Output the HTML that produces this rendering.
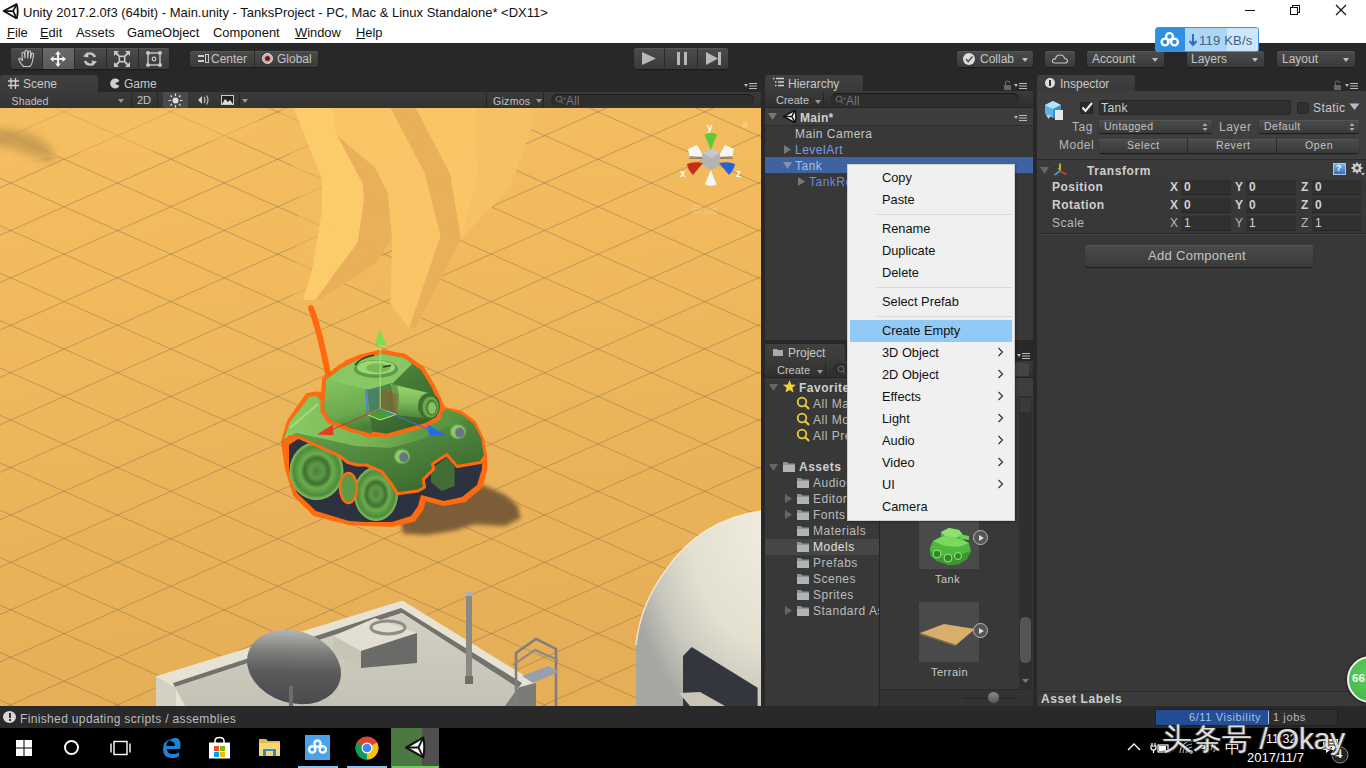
<!DOCTYPE html>
<html><head><meta charset="utf-8">
<style>
*{margin:0;padding:0;box-sizing:border-box}
html,body{width:1366px;height:768px;overflow:hidden;background:#282828;font-family:"Liberation Sans",sans-serif}
.a{position:absolute}
.t{position:absolute;white-space:nowrap;line-height:1}
.u{color:#bdbdbd;font-size:11px}
.btn{position:absolute;border-radius:3px;background:linear-gradient(#4b4b4b,#3a3a3a);box-shadow:0 1px 1px #1a1a1a, inset 0 1px 0 #555}
.dd{position:absolute;width:0;height:0;border-left:3px solid transparent;border-right:3px solid transparent;border-top:4px solid #bdbdbd}
.menu{position:absolute;font-size:12.8px;color:#111;white-space:nowrap;line-height:1}
.arr{position:absolute;font-size:13px;color:#333}
</style></head><body>

<!-- Title bar -->
<div class="a" style="left:0;top:0;width:1366px;height:43px;background:#fff"></div>
<svg class="a" style="left:2px;top:2px" width="17" height="17" viewBox="0 0 16 16"><path d="M1.5,8.5 L13.8,2 Q15.8,8.5 13.8,15.5 Z" fill="none" stroke="#111" stroke-width="1.7" stroke-linejoin="round"/><path d="M10.5,8.5 L1.5,8.5 M10.5,8.5 L13.8,2 M10.5,8.5 L13.8,15.5" stroke="#111" stroke-width="1.6"/></svg>
<div class="t" style="left:23px;top:5.5px;font-size:13px;color:#111">Unity 2017.2.0f3 (64bit) - Main.unity - TanksProject - PC, Mac &amp; Linux Standalone* &lt;DX11&gt;</div>
<!-- window controls -->
<div class="a" style="left:1245px;top:10px;width:10px;height:1px;background:#111"></div>
<div class="a" style="left:1292px;top:5px;width:8px;height:8px;border:1px solid #111"></div>
<div class="a" style="left:1290px;top:7px;width:8px;height:8px;border:1px solid #111;background:#fff"></div>
<svg class="a" style="left:1335px;top:4px" width="12" height="12"><path d="M1 1L11 11M11 1L1 11" stroke="#111" stroke-width="1.2"/></svg>

<!-- Menu -->
<div class="t" style="left:7px;top:26.5px;font-size:12.9px;color:#111"><u>F</u>ile</div>
<div class="t" style="left:40px;top:26.5px;font-size:12.9px;color:#111"><u>E</u>dit</div>
<div class="t" style="left:76px;top:26.5px;font-size:12.9px;color:#111">Assets</div>
<div class="t" style="left:127px;top:26.5px;font-size:12.9px;color:#111">GameObject</div>
<div class="t" style="left:213px;top:26.5px;font-size:12.9px;color:#111">Component</div>
<div class="t" style="left:295px;top:26.5px;font-size:12.9px;color:#111"><u>W</u>indow</div>
<div class="t" style="left:356px;top:26.5px;font-size:12.9px;color:#111"><u>H</u>elp</div>

<!-- Main toolbar -->
<div class="a" style="left:0;top:43px;width:1366px;height:33px;background:#282828"></div>


<!--SCENE--><svg class="a" style="left:0;top:108px" width="761" height="598" viewBox="0 108 761 598">
<defs><linearGradient id="bg" x1="0" y1="0" x2="0.15" y2="1"><stop offset="0" stop-color="#f5be60"/><stop offset="0.3" stop-color="#f2ba5d"/><stop offset="1" stop-color="#e6ae56"/></linearGradient><filter id="blur4" x="-50%" y="-50%" width="200%" height="200%"><feGaussianBlur stdDeviation="4"/></filter><filter id="blur2" x="-50%" y="-50%" width="200%" height="200%"><feGaussianBlur stdDeviation="2"/></filter><filter id="blur1"><feGaussianBlur stdDeviation="0.7"/></filter><linearGradient id="dish" x1="0.2" y1="0" x2="0.6" y2="1"><stop offset="0" stop-color="#c4c4be"/><stop offset="0.35" stop-color="#7c7c7a"/><stop offset="0.6" stop-color="#5a5a5c"/><stop offset="1" stop-color="#4a4a4e"/></linearGradient><linearGradient id="dome" x1="1" y1="0.1" x2="0" y2="0.9"><stop offset="0" stop-color="#efecdc"/><stop offset="0.5" stop-color="#e2dfcf"/><stop offset="1" stop-color="#a8a8a4"/></linearGradient><radialGradient id="wheel" cx="0.45" cy="0.4" r="0.6"><stop offset="0" stop-color="#4f8a3c"/><stop offset="0.35" stop-color="#6fb050"/><stop offset="0.7" stop-color="#4d8a3a"/><stop offset="1" stop-color="#7cc058"/></radialGradient></defs>
<rect x="0" y="108" width="761" height="598" fill="url(#bg)"/>
<path d="M-10,128 Q25,128 45,142 Q58,152 52,160 Q30,156 10,148 L-10,146 Z" fill="#7a5a34" opacity="0.6" filter="url(#blur4)"/>
<polygon points="440,478 480,483.75 505,494.7 517.5,505.6 520.6,518 505,526 473.75,524.4 455,530.6 427,535 403.4,533.75 400,520" fill="#6a5030" opacity="0.85" filter="url(#blur2)"/>
<path d="M-10,-1296.54L771,-949.62M-10,-1183.26L771,-1530.18M-10,-1249.11L771,-902.19M-10,-1135.83L771,-1482.75M-10,-1201.68L771,-854.76M-10,-1088.40L771,-1435.32M-10,-1154.25L771,-807.33M-10,-1040.97L771,-1387.89M-10,-1106.82L771,-759.90M-10,-993.54L771,-1340.46M-10,-1059.39L771,-712.47M-10,-946.11L771,-1293.03M-10,-1011.96L771,-665.04M-10,-898.68L771,-1245.60M-10,-964.53L771,-617.61M-10,-851.25L771,-1198.17M-10,-917.10L771,-570.18M-10,-803.82L771,-1150.74M-10,-869.67L771,-522.75M-10,-756.39L771,-1103.31M-10,-822.24L771,-475.32M-10,-708.96L771,-1055.88M-10,-774.81L771,-427.89M-10,-661.53L771,-1008.45M-10,-727.38L771,-380.46M-10,-614.10L771,-961.02M-10,-679.95L771,-333.03M-10,-566.67L771,-913.59M-10,-632.52L771,-285.60M-10,-519.24L771,-866.16M-10,-585.09L771,-238.17M-10,-471.81L771,-818.73M-10,-537.66L771,-190.74M-10,-424.38L771,-771.30M-10,-490.23L771,-143.31M-10,-376.95L771,-723.87M-10,-442.80L771,-95.88M-10,-329.52L771,-676.44M-10,-395.37L771,-48.45M-10,-282.09L771,-629.01M-10,-347.94L771,-1.02M-10,-234.66L771,-581.58M-10,-300.51L771,46.41M-10,-187.23L771,-534.15M-10,-253.08L771,93.84M-10,-139.80L771,-486.72M-10,-205.65L771,141.27M-10,-92.37L771,-439.29M-10,-158.22L771,188.70M-10,-44.94L771,-391.86M-10,-110.79L771,236.13M-10,2.49L771,-344.43M-10,-63.36L771,283.56M-10,49.92L771,-297.00M-10,-15.93L771,330.99M-10,97.35L771,-249.57M-10,31.50L771,378.42M-10,144.78L771,-202.14M-10,78.93L771,425.85M-10,192.21L771,-154.71M-10,126.36L771,473.28M-10,239.64L771,-107.28M-10,173.79L771,520.71M-10,287.07L771,-59.85M-10,221.22L771,568.14M-10,334.50L771,-12.42M-10,268.65L771,615.57M-10,381.93L771,35.01M-10,316.08L771,663.00M-10,429.36L771,82.44M-10,363.51L771,710.43M-10,476.79L771,129.87M-10,410.94L771,757.86M-10,524.22L771,177.30M-10,458.37L771,805.29M-10,571.65L771,224.73M-10,505.80L771,852.72M-10,619.08L771,272.16M-10,553.23L771,900.15M-10,666.51L771,319.59M-10,600.66L771,947.58M-10,713.94L771,367.02M-10,648.09L771,995.01M-10,761.37L771,414.45M-10,695.52L771,1042.44M-10,808.80L771,461.88M-10,742.95L771,1089.87M-10,856.23L771,509.31M-10,790.38L771,1137.30M-10,903.66L771,556.74M-10,837.81L771,1184.73M-10,951.09L771,604.17M-10,885.24L771,1232.16M-10,998.52L771,651.60M-10,932.67L771,1279.59M-10,1045.95L771,699.03M-10,980.10L771,1327.02M-10,1093.38L771,746.46M-10,1027.53L771,1374.45M-10,1140.81L771,793.89M-10,1074.96L771,1421.88M-10,1188.24L771,841.32M-10,1122.39L771,1469.31M-10,1235.67L771,888.75M-10,1169.82L771,1516.74M-10,1283.10L771,936.18M-10,1217.25L771,1564.17M-10,1330.53L771,983.61M-10,1264.68L771,1611.60M-10,1377.96L771,1031.04M-10,1312.11L771,1659.03M-10,1425.39L771,1078.47M-10,1359.54L771,1706.46M-10,1472.82L771,1125.90M-10,1406.97L771,1753.89M-10,1520.25L771,1173.33M-10,1454.40L771,1801.32M-10,1567.68L771,1220.76M-10,1501.83L771,1848.75M-10,1615.11L771,1268.19" stroke="#7a6a50" stroke-opacity="0.42" stroke-width="1" fill="none"/>
<polygon points="0,108 262,108 257,130 168,152 99,150 0,165" fill="#f7c264" opacity="0.45"/>
<polygon points="293.8,108.0 534.0,108.0 531.0,130.0 509.0,189.0 461.0,239.0 415.6,328.0 409.0,328.0 390.6,305.0 392.0,239.0 375.0,264.0 318.8,300.0 303.0,300.0 312.5,267.5 321.9,211.0 321.9,180.0" fill="#f9c767" opacity="0.9"/>
<polygon points="293.8,108.0 332.0,108.0 337.5,136.0 362.5,183.0 364.0,199.0 357.8,242.5 334.4,273.8 315.6,300.0 303.0,300.0 312.5,267.5 321.9,211.0 321.9,180.0" fill="#fdcc6b" opacity="0.85"/>
<polygon points="337.5,136.0 375.0,167.5 387.5,192.5 392.0,239.0 375.0,264.0 318.8,300.0 315.6,300.0 334.4,273.8 357.8,242.5 364.0,199.0 362.5,183.0" fill="#e7ac58" opacity="0.9"/>
<polygon points="390.6,108.0 415.6,108.0 450.0,173.8 461.0,239.0 415.6,328.0 409.0,328.0 440.6,236.0 425.0,173.8" fill="#e7ac58" opacity="0.9"/>
<polygon points="475.0,108.0 534.0,108.0 531.0,130.0 509.0,189.0 461.0,239.0 478.0,177.0" fill="#f5c064" opacity="0.9"/>
<polygon points="280,108 293.75,108 321.9,180 321.9,211 312.5,267.5 303,300 292,298 300,200" fill="#f3bc62" opacity="0.5"/>
<defs><linearGradient id="hullf" x1="0" y1="0" x2="0.7" y2="1"><stop offset="0" stop-color="#72b452"/><stop offset="0.5" stop-color="#568e42"/><stop offset="1" stop-color="#3a6a2e"/></linearGradient><linearGradient id="turf" x1="0" y1="0" x2="0.2" y2="1"><stop offset="0" stop-color="#84c660"/><stop offset="0.7" stop-color="#6aa84e"/><stop offset="1" stop-color="#4a8038"/></linearGradient><linearGradient id="turs" x1="0" y1="0" x2="0.8" y2="1"><stop offset="0" stop-color="#5e9c48"/><stop offset="1" stop-color="#34602a"/></linearGradient><linearGradient id="barrel" x1="0" y1="0" x2="0" y2="1"><stop offset="0" stop-color="#9ad870"/><stop offset="0.5" stop-color="#7cbc5a"/><stop offset="1" stop-color="#4a8038"/></linearGradient><radialGradient id="whl" cx="0.5" cy="0.5" r="0.5"><stop offset="0" stop-color="#4a7e3a"/><stop offset="0.25" stop-color="#5c9a46"/><stop offset="0.45" stop-color="#3f7030"/><stop offset="0.6" stop-color="#6aae4e"/><stop offset="0.85" stop-color="#4e8a3c"/><stop offset="1" stop-color="#86c464"/></radialGradient></defs>
<polygon points="331.0,376.0 345.8,361.5 360.0,355.8 378.8,351.0 396.0,355.8 413.0,365.8 427.5,380.0 439.0,395.9 444.0,408.0 461.6,412.0 475.0,422.0 483.0,439.0 486.0,456.0 486.5,469.0 481.5,487.0 465.0,501.0 444.0,505.0 425.0,500.0 422.5,509.0 414.5,520.5 392.0,526.0 366.0,525.0 349.0,524.0 314.0,515.0 294.0,495.0 286.0,469.0 282.0,442.0 288.0,421.0 299.0,405.0 307.0,394.0 316.0,392.5 323.3,393.0" fill="#ff6a10" stroke="#ff6a10" stroke-width="2" stroke-linejoin="round"/>
<path d="M311,308 Q321,335 329,380" stroke="#ff6a10" stroke-width="6" fill="none" stroke-linecap="round"/>
<polygon points="289.0,445.0 289.0,470.0 297.0,493.0 316.0,511.0 349.0,521.0 366.0,522.0 392.0,522.0 411.0,516.0 418.0,506.0 421.0,495.0 444.0,501.0 462.0,497.0 477.0,485.0 482.0,469.0 482.0,458.0 457.2,466.5 446.8,454.7 432.4,463.9 433.8,469.0 423.3,479.5 424.6,487.3 418.0,491.0 397.3,493.8 392.0,484.7 381.7,471.7 366.0,465.0 357.0,465.0 347.8,462.5 340.0,456.0 299.8,437.8" fill="#2c3240"/>
<ellipse cx="316.5" cy="471" rx="27" ry="29" fill="url(#whl)"/>
<ellipse cx="376" cy="494" rx="22" ry="27" fill="url(#whl)"/>
<ellipse cx="348.5" cy="488" rx="8.5" ry="15" fill="#5c9c46" stroke="#ff6a10" stroke-width="2.5"/>
<polygon points="431,469 446.8,457.3 454.6,466.5 454.6,486 441.6,491 431,482" fill="#406e34"/>
<polygon points="284.0,440.0 290.0,421.7 301.0,408.0 309.0,397.0 316.0,396.0 321.5,401.6 327.2,416.0 345.8,427.4 367.3,437.4 386.0,436.0 410.3,428.8 430.3,423.0 441.0,413.0 446.7,409.3 461.6,414.3 474.0,424.0 481.4,439.0 483.9,456.0 480.6,462.5 457.2,466.5 446.8,454.7 432.4,463.9 433.8,469.0 423.3,479.5 424.6,487.3 418.0,491.0 397.3,493.8 392.0,484.7 381.7,471.7 366.0,465.0 357.0,465.0 347.8,462.5 340.0,456.0 299.8,437.8 290.0,436.5" fill="url(#hullf)"/>
<defs><linearGradient id="htopg" x1="0" y1="0" x2="1" y2="0"><stop offset="0" stop-color="#8ccc64" stop-opacity="0.95"/><stop offset="0.45" stop-color="#80c05c" stop-opacity="0.8"/><stop offset="1" stop-color="#5a9a46" stop-opacity="0.3"/></linearGradient></defs>
<polygon points="284.0,439.0 290.0,421.7 301.0,408.0 309.0,397.0 316.0,396.0 321.5,401.6 327.2,416.0 345.8,427.4 367.3,437.4 386.0,436.0 410.3,428.8 430.3,423.0 441.0,413.0 446.7,409.3 461.6,414.3 468.0,420.0 445.0,428.0 420.0,440.0 390.0,448.0 355.0,446.0 320.0,438.0 296.0,433.0" fill="url(#htopg)"/>
<path d="M290,428 L318,404" stroke="#b0e888" stroke-width="2" opacity="0.7"/>
<polyline points="288,437 299.8,437.8 340,456 347.8,462.5 357,465 366,465 381.7,471.7 392,484.7 397.3,493.8 418,491 424.6,487.3 423.3,479.5 433.75,469 432.4,463.9 446.8,454.7 457.2,466.5 480.6,462.5 485,456" fill="none" stroke="#ff6a10" stroke-width="3" stroke-linejoin="round"/>
<ellipse cx="402" cy="456.3" rx="8.5" ry="8" fill="#5e9e48"/><ellipse cx="402" cy="456.3" rx="7" ry="6.5" fill="#8acb64"/><ellipse cx="403.8" cy="457.3" rx="4.5" ry="5" fill="#6a7488"/>
<ellipse cx="457.9" cy="431.6" rx="8.5" ry="8" fill="#5e9e48"/><ellipse cx="457.9" cy="431.6" rx="7" ry="6.5" fill="#8acb64"/><ellipse cx="459.7" cy="432.6" rx="4.5" ry="5" fill="#6a7488"/>
<polygon points="321.2,411.3 322.0,395.0 323.0,378.5 339.4,365.7 357.6,356.6 383.0,351.0 405.0,354.8 423.0,367.5 434.0,385.8 441.5,404.0 439.7,418.6 427.0,425.9 386.8,436.8 350.4,431.3 328.5,422.2" fill="#ff6a10" stroke="#ff6a10" stroke-width="2" stroke-linejoin="round"/>
<polygon points="324.5,410.5 325.0,395.0 326.0,380.0 341.0,368.5 358.5,359.6 383.0,354.0 404.0,357.8 421.0,370.0 431.5,387.0 438.5,404.0 437.0,416.5 425.5,423.0 386.5,433.8 351.0,428.3 330.5,419.5" fill="url(#turs)"/>
<polygon points="324.5,410.5 325.0,395.0 326.0,380.0 367.3,390.0 370.0,412.0 372.0,434.0 351.0,428.3 330.5,419.5" fill="url(#turf)"/>
<polygon points="326.0,380.0 341.0,368.5 358.5,359.6 383.0,354.0 404.0,357.8 412.0,364.0 393.0,383.0 367.3,390.0" fill="#88c864"/>
<polygon points="367.3,390 393,383 396,414 380,420 370,412" fill="#4e8a3c"/>
<ellipse cx="376" cy="369" rx="22" ry="9" fill="#5e9a48"/>
<ellipse cx="376" cy="367.5" rx="19" ry="7" fill="#9ad872"/>
<ellipse cx="378" cy="368" rx="12" ry="4.5" fill="#7ab858"/>
<path d="M355,365 Q360,358 374,355" stroke="#263d20" stroke-width="1.6" fill="none"/><path d="M383,367 L391,365.5" stroke="#263d20" stroke-width="1.6"/>
<polygon points="391,384 428.9,393 431,419 395,415" fill="url(#barrel)"/>
<ellipse cx="394" cy="399" rx="5" ry="16" fill="#4a8038" opacity="0.6"/>
<ellipse cx="429" cy="406" rx="11" ry="13" fill="#3e7030"/>
<ellipse cx="430.5" cy="407" rx="8" ry="10.5" fill="#6aa84c"/>
<ellipse cx="431.5" cy="407.5" rx="5.5" ry="8" fill="#4a8038"/>
<ellipse cx="432" cy="408" rx="4" ry="6" fill="#84c460"/>
<polygon points="365.9,390 380,388.7 380,408.8 367.3,414.5" fill="#3a6ad0" fill-opacity="0.25" stroke="#4a7ae0" stroke-width="1.2"/>
<polygon points="380,388.7 396,394.4 396,414.5 380,408.8" fill="#b04030" fill-opacity="0.35" stroke="#c05040" stroke-width="1"/>
<polygon points="367.3,414.5 380,408.8 396,414.5 380,420" fill="#4a9a38" stroke="#b8f080" stroke-width="1"/>
<path d="M380.2,345 L380.2,409" stroke="#9ae870" stroke-width="1"/>
<path d="M380,409 L331,430" stroke="#d03020" stroke-width="1.2" opacity="0.8"/>
<path d="M380,409 L430,430" stroke="#3a70e0" stroke-width="1.2" opacity="0.9"/>
<polygon points="374.5,345 386,345 380.2,329" fill="#7edc50"/>
<polygon points="317,434.6 333,424.5 333.6,435.3" fill="#e83a20"/>
<polygon points="446,435.3 427.5,424.5 429,435.3" fill="#2a6ae8"/>
<polygon points="402.5,600.6 536.0,682.7 536.0,706.0 156.0,706.0 156.0,676.3" fill="#e6e3d3"/>
<polygon points="156,676.3 176,688 176,706 156,706" fill="#d4d1c2"/>
<polygon points="536,682.7 536,706 470,706 480,698" fill="#7b7b78"/>
<polygon points="401,608 522,683 518,688 402,613 175,687 173,683" fill="#5e5e5c" opacity="0.85"/>
<defs><linearGradient id="roofin" x1="0" y1="0" x2="0" y2="1"><stop offset="0" stop-color="#d2d0c2"/><stop offset="1" stop-color="#c4c2b5"/></linearGradient></defs><polygon points="402,613 518,688 505,706 185,706 175,687" fill="url(#roofin)"/>
<polygon points="333.5,636 375,618 417,633 361,651" fill="#e2dfd1"/>
<polygon points="333.5,636 361,651 361,668 333.5,655" fill="#c8c5b6"/>
<polygon points="361,651 417,633 417,663 361,668" fill="#6a6a68"/>
<ellipse cx="388" cy="627.4" rx="17" ry="6.5" fill="none" stroke="#8e8c84" stroke-width="3"/>
<ellipse cx="294" cy="667" rx="48" ry="36" fill="url(#dish)" transform="rotate(18 294 667)"/>
<rect x="289" y="686" width="4" height="20" fill="#6c6c6a"/>
<rect x="466" y="593" width="6" height="90" fill="#8a8984"/><rect x="465" y="676" width="8" height="8" fill="#6f6e6a"/><rect x="465" y="592" width="8" height="4" fill="#b0afaa"/>
<path d="M516,706 L516,653 L536,639 L556,649 L556,706" fill="none" stroke="#7f7e7a" stroke-width="2.5"/>
<path d="M513,665 L535,650 L558,660" fill="none" stroke="#8a8984" stroke-width="2"/>
<polygon points="522,676 548,666 559,672 533,683" fill="#9aa0aa"/>
<defs><radialGradient id="domeR" cx="1.05" cy="0.05" r="1.15"><stop offset="0" stop-color="#f0ede0"/><stop offset="0.55" stop-color="#e3e0d0"/><stop offset="0.8" stop-color="#c9c8bd"/><stop offset="1" stop-color="#a6a6a2"/></radialGradient></defs>
<path d="M761,511 Q700,520 666,570 Q640,605 636,645 L636,706 L761,706 Z" fill="url(#domeR)"/>
<path d="M761,511 Q700,520 666,570 Q640,605 636,645" fill="none" stroke="#f6f2dc" stroke-width="1.5" opacity="0.8"/>
<polygon points="683,656 691.7,647 757.6,687.7 757.6,706 683,706" fill="#34363e"/>
<polygon points="679,693 700,692 725,706 690,706" fill="#c9c6b8"/>
<polygon points="688,149 697,145 704,157 690,158" fill="#f6f6f6"/>
<polygon points="690,156 704,157 703,159 689,159" fill="#6a5a4a" opacity="0.6"/>
<polygon points="734,149 725,145 718,157 732,158" fill="#f6f6f6"/>
<polygon points="732,156 718,157 719,159 733,159" fill="#6a5a4a" opacity="0.6"/>
<polygon points="702,153 711,148 720,153 720,165 711,170 702,165" fill="#b4b4b4"/>
<polygon points="702,153 711,148 720,153 711,158" fill="#c8c8c8"/>
<path d="M704.5,134.5 Q710.8,131 717,134.5 L710.8,150 Z" fill="#62c83a"/>
<path d="M687,164 Q693,161 703,163 L693,175 Q688,170 687,164 Z" fill="#c0301a"/>
<path d="M735,164 Q729,161 719,163 L729,175 Q734,170 735,164 Z" fill="#2a62d8"/>
<path d="M705,184.5 Q710.8,187 716.6,184.5 L710.8,170 Z" fill="#f6f6f6"/>
<text x="707" y="131" font-family="Liberation Sans" font-weight="bold" font-size="10" fill="#fff">y</text>
<text x="680" y="177" font-family="Liberation Sans" font-weight="bold" font-size="10" fill="#fff">x</text>
<text x="736" y="177" font-family="Liberation Sans" font-weight="bold" font-size="10" fill="#fff">z</text>
<path d="M692,206H702M692,209H702M692,212H702" stroke="#fde0b0" stroke-width="1" opacity="0.5"/>
<text x="704" y="214" font-family="Liberation Sans" font-size="10" fill="#fde0b0" opacity="0.4">Iso</text>
<circle cx="745" cy="125" r="3" fill="#f7d9a8" opacity="0.5"/>
</svg><!--/SCENE-->
<!-- tool buttons -->
<div class="btn" style="left:11px;top:48px;width:158px;height:21px"></div>
<div class="a" style="left:42px;top:48px;width:32px;height:21px;background:linear-gradient(#6a6a6a,#5a5a5a)"></div>
<div class="a" style="left:42px;top:48px;width:1px;height:21px;background:#2a2a2a"></div>
<div class="a" style="left:74px;top:48px;width:1px;height:21px;background:#2a2a2a"></div>
<div class="a" style="left:106px;top:48px;width:1px;height:21px;background:#2a2a2a"></div>
<div class="a" style="left:138px;top:48px;width:1px;height:21px;background:#2a2a2a"></div>
<!-- hand -->
<svg class="a" style="left:17px;top:49px" width="20" height="19" viewBox="0 0 20 19"><path d="M6.5 17.5 Q3 14 1.8 10.5 Q1.5 9 3 9.2 L5.5 11.5 L5 4.5 Q5 3.2 6.2 3.2 Q7.3 3.2 7.5 4.5 L8 9 L8 2.5 Q8.2 1.3 9.3 1.3 Q10.5 1.3 10.6 2.5 L10.8 9 L11.3 3.2 Q11.5 2 12.6 2 Q13.7 2.1 13.7 3.3 L13.5 9.2 L14.5 5 Q14.8 4 15.8 4.2 Q16.8 4.5 16.6 5.6 L15.5 12 Q15 15.5 13 17.5 Z" fill="none" stroke="#c8c8c8" stroke-width="1.1" stroke-linejoin="round"/></svg>
<!-- move -->
<svg class="a" style="left:49px;top:50px" width="18" height="18" viewBox="0 0 18 18"><path d="M9 1 L12 4.5 L10 4.5 L10 8 L13.5 8 L13.5 6 L17 9 L13.5 12 L13.5 10 L10 10 L10 13.5 L12 13.5 L9 17 L6 13.5 L8 13.5 L8 10 L4.5 10 L4.5 12 L1 9 L4.5 6 L4.5 8 L8 8 L8 4.5 L6 4.5 Z" fill="#f2f2f2"/></svg>
<!-- rotate -->
<svg class="a" style="left:81px;top:50px" width="18" height="18" viewBox="0 0 18 18"><path d="M14 7 A5.5 5.5 0 0 0 5 5" fill="none" stroke="#c8c8c8" stroke-width="2.4"/><path d="M4 11 A5.5 5.5 0 0 0 13 13" fill="none" stroke="#c8c8c8" stroke-width="2.4"/><path d="M6.5 2 L2 6.5 L7.5 7.5 Z" fill="#c8c8c8"/><path d="M11.5 16 L16 11.5 L10.5 10.5 Z" fill="#c8c8c8"/></svg>
<!-- scale -->
<svg class="a" style="left:113px;top:50px" width="18" height="18" viewBox="0 0 18 18"><g fill="#c8c8c8"><path d="M1 1H6L1 6Z"/><path d="M17 1H12L17 6Z"/><path d="M1 17H6L1 12Z"/><path d="M17 17H12L17 12Z"/></g><path d="M3 3L6 6M15 3L12 6M3 15L6 12M15 15L12 12" stroke="#c8c8c8" stroke-width="1.8"/><rect x="6.3" y="6.3" width="5.4" height="5.4" fill="none" stroke="#c8c8c8" stroke-width="1.6"/><rect x="8.2" y="8.2" width="1.6" height="1.6" fill="#333"/></svg>
<!-- rect -->
<svg class="a" style="left:145px;top:50px" width="18" height="18" viewBox="0 0 18 18"><rect x="3" y="3" width="12" height="12" fill="none" stroke="#c8c8c8" stroke-width="1.4"/><circle cx="3" cy="3" r="2" fill="#c8c8c8"/><circle cx="15" cy="3" r="2" fill="#c8c8c8"/><circle cx="3" cy="15" r="2" fill="#c8c8c8"/><circle cx="15" cy="15" r="2" fill="#c8c8c8"/><circle cx="9" cy="9" r="1.8" fill="none" stroke="#c8c8c8" stroke-width="1.2"/></svg>

<!-- center/global -->
<div class="btn" style="left:190px;top:51px;width:128px;height:16px"></div>
<div class="a" style="left:254px;top:51px;width:1px;height:16px;background:#2a2a2a"></div>
<div class="a" style="left:198px;top:55px;width:6px;height:2px;background:#ccc"></div>
<div class="a" style="left:198px;top:60px;width:6px;height:2px;background:#ccc"></div>
<div class="a" style="left:205px;top:54px;width:4px;height:9px;border:1px solid #ccc"></div>
<div class="t u" style="left:211px;top:53px;font-size:12px;color:#c4c4c4">Center</div>
<div class="a" style="left:262px;top:53px;width:11px;height:11px;border-radius:50%;background:#caa;border:1px solid #ddd"><div class="a" style="left:2px;top:2px;width:5px;height:5px;border-radius:50%;background:#6a1a1a"></div></div>
<div class="t u" style="left:277px;top:53px;font-size:12px;color:#c4c4c4">Global</div>

<!-- play buttons -->
<div class="btn" style="left:634px;top:48px;width:94px;height:21px"></div>
<div class="a" style="left:664px;top:48px;width:1px;height:21px;background:#2a2a2a"></div>
<div class="a" style="left:697px;top:48px;width:1px;height:21px;background:#2a2a2a"></div>
<svg class="a" style="left:640px;top:50px" width="20" height="17"><path d="M2 2 L16 8.5 L2 15 Z" fill="#b8b8b8"/></svg>
<div class="a" style="left:677px;top:52px;width:3px;height:13px;background:#b8b8b8"></div>
<div class="a" style="left:684px;top:52px;width:3px;height:13px;background:#b8b8b8"></div>
<svg class="a" style="left:703px;top:50px" width="20" height="17"><path d="M3 2 L15 8.5 L3 15 Z" fill="#b8b8b8"/><rect x="15" y="2" width="3" height="13" fill="#b8b8b8"/></svg>

<!-- right toolbar buttons -->
<div class="btn" style="left:957px;top:51px;width:76px;height:16px"></div>
<div class="a" style="left:963px;top:53px;width:12px;height:12px;border-radius:50%;background:#ddd"></div>
<svg class="a" style="left:963px;top:53px" width="12" height="12"><path d="M3 6 L5.2 8.5 L9.5 3.5" fill="none" stroke="#555" stroke-width="1.6"/></svg>
<div class="t u" style="left:980px;top:53px;font-size:12px;color:#c4c4c4">Collab</div>
<div class="dd" style="left:1022px;top:58px"></div>
<div class="btn" style="left:1045px;top:51px;width:30px;height:16px"></div>
<svg class="a" style="left:1051px;top:53px" width="18" height="12"><path d="M4 10 Q1 10 1.5 7.5 Q2 5.5 4.5 6 Q5 2 9 2 Q13 2 13.5 5.5 Q16.5 5.5 16.5 8 Q16.5 10 14 10 Z" fill="none" stroke="#c4c4c4" stroke-width="1.1"/></svg>
<div class="btn" style="left:1087px;top:51px;width:77px;height:16px"></div>
<div class="t u" style="left:1092px;top:53px;font-size:12px;color:#c4c4c4">Account</div>
<div class="dd" style="left:1152px;top:58px"></div>
<div class="btn" style="left:1187px;top:51px;width:77px;height:16px"></div>
<div class="t u" style="left:1191px;top:53px;font-size:12px;color:#c4c4c4">Layers</div>
<div class="dd" style="left:1252px;top:58px"></div>
<div class="btn" style="left:1277px;top:51px;width:78px;height:16px"></div>
<div class="t u" style="left:1282px;top:53px;font-size:12px;color:#c4c4c4">Layout</div>
<div class="dd" style="left:1343px;top:58px"></div>

<!-- baidu overlay -->
<div class="a" style="left:1155px;top:27px;width:104px;height:25px;background:#acd6f6;border:1px solid #3d95e0;border-radius:3px"></div>
<div class="a" style="left:1227px;top:28px;width:31px;height:23px;background:#cde6fa;border-radius:0 2px 2px 0"></div>
<div class="a" style="left:1156px;top:28px;width:29px;height:23px;background:#2f8fe0;border-radius:2px 0 0 2px"></div>
<svg class="a" style="left:1159px;top:31px" width="22" height="17" viewBox="0 0 22 17"><g fill="none" stroke="#fff" stroke-width="2.4"><circle cx="10.5" cy="5.5" r="3.4"/><circle cx="6" cy="11" r="3.4"/><circle cx="15.5" cy="11" r="3.4"/></g></svg>
<svg class="a" style="left:1188px;top:33px" width="10" height="14"><path d="M5 1 V11 M1.5 8 L5 12 L8.5 8" fill="none" stroke="#2a6fc0" stroke-width="2"/></svg>
<div class="t" style="left:1199px;top:34px;font-size:13px;color:#3a6488;letter-spacing:0.2px">119 KB/s</div>


<!-- ===== Scene panel header ===== -->
<div class="a" style="left:0;top:75px;width:98px;height:17px;background:linear-gradient(#404040,#3a3a3a);border-radius:3px 3px 0 0"></div>
<svg class="a" style="left:7px;top:77px" width="13" height="13"><path d="M4 1V12M8.5 1V12M1 4H12M1 8.5H12" stroke="#d0d0d0" stroke-width="1.3"/></svg>
<div class="t" style="left:23px;top:78px;font-size:12px;color:#c8c8c8">Scene</div>
<svg class="a" style="left:109px;top:78px" width="12" height="11"><path d="M10.5 3 A5 5 0 1 0 10.5 8 L6 5.5 Z" fill="#d0d0d0"/></svg>
<div class="t" style="left:124px;top:78px;font-size:12px;color:#c8c8c8">Game</div>
<svg class="a" style="left:744px;top:82px" width="14" height="8"><path d="M0 2H4L2 5Z" fill="#bbb"/><path d="M5 1.5H13M5 4H13M5 6.5H13" stroke="#bbb" stroke-width="1.2"/></svg>
<!-- scene toolbar -->
<div class="a" style="left:0;top:92px;width:761px;height:16px;background:linear-gradient(#3a3a3a,#333)"></div>
<div class="t" style="left:11.5px;top:95.5px;font-size:10.5px;color:#c4c4c4;letter-spacing:0.15px">Shaded</div>
<div class="dd" style="left:118px;top:99px;border-top-color:#999"></div>
<div class="a" style="left:131px;top:92px;width:1px;height:16px;background:#262626"></div>
<div class="t" style="left:137px;top:95px;font-size:11px;color:#c4c4c4">2D</div>
<div class="a" style="left:157px;top:92px;width:1px;height:16px;background:#262626"></div>
<div class="a" style="left:163px;top:92px;width:25px;height:16px;background:#4a4a4a"></div>
<svg class="a" style="left:168px;top:93px" width="15" height="15"><circle cx="7.5" cy="7.5" r="3" fill="#ddd"/><path d="M7.5 0.5V3M7.5 12V14.5M0.5 7.5H3M12 7.5H14.5M2.5 2.5L4 4M11 11L12.5 12.5M12.5 2.5L11 4M4 11L2.5 12.5" stroke="#ddd" stroke-width="1.2"/></svg>
<svg class="a" style="left:194px;top:93px" width="16" height="14"><path d="M1 7H4L8 3V11L4 7" fill="#ccc"/><path d="M10 4Q12 7 10 10M12.5 2.5Q15.5 7 12.5 11.5" fill="none" stroke="#ccc" stroke-width="1.1"/></svg>
<div class="a" style="left:221px;top:95px;width:13px;height:10px;border:1px solid #ccc;background:#222"></div>
<svg class="a" style="left:222px;top:96px" width="11" height="8"><path d="M0 8L3 3L6 6L8 4L11 8Z" fill="#ddd"/></svg>
<div class="dd" style="left:242px;top:99px;border-top-color:#999"></div>
<div class="a" style="left:239px;top:94px;width:1px;height:12px;background:#262626"></div>
<div class="a" style="left:486px;top:92px;width:1px;height:16px;background:#262626"></div>
<div class="t" style="left:493px;top:95.5px;font-size:10.5px;color:#c4c4c4;letter-spacing:0.3px">Gizmos</div>
<div class="dd" style="left:536px;top:99px;border-top-color:#999"></div>
<div class="a" style="left:543px;top:92px;width:1px;height:16px;background:#262626"></div>
<div class="a" style="left:551px;top:94px;width:203px;height:12px;border-radius:6px;background:#2e2e2e;box-shadow:inset 0 1px 1px #1c1c1c"></div>
<svg class="a" style="left:555px;top:95px" width="12" height="10"><circle cx="4" cy="4" r="2.8" fill="none" stroke="#666" stroke-width="1.1"/><path d="M6 6L8 8.5" stroke="#666" stroke-width="1.2"/><path d="M8 3H11L9.5 5Z" fill="#666"/></svg>
<div class="t" style="left:566px;top:94.5px;font-size:12px;color:#777">All</div>
<div class="a" style="left:761px;top:76px;width:4px;height:630px;background:#282828"></div>

<!-- ===== Hierarchy panel ===== -->
<div class="a" style="left:765px;top:91px;width:268px;height:249px;background:#383838"></div>
<div class="a" style="left:765px;top:75px;width:98px;height:16px;background:linear-gradient(#404040,#3a3a3a);border-radius:3px 3px 0 0"></div>
<svg class="a" style="left:772px;top:77px" width="13" height="11"><path d="M1 1.5H2.5M4 1.5H12M3 5H4.5M6 5H12M3 8.5H4.5M6 8.5H12" stroke="#d0d0d0" stroke-width="1.4"/></svg>
<div class="t" style="left:788px;top:78px;font-size:12px;color:#c8c8c8">Hierarchy</div>
<svg class="a" style="left:1003px;top:80px" width="9" height="10"><path d="M2.5 5V3Q2.5 1 4.5 1Q6.5 1 6.5 3" fill="none" stroke="#666" stroke-width="1.2"/><rect x="1" y="5" width="7" height="5" fill="#666"/></svg>
<svg class="a" style="left:1014px;top:82px" width="14" height="8"><path d="M0 2H4L2 5Z" fill="#bbb"/><path d="M5 1.5H13M5 4H13M5 6.5H13" stroke="#bbb" stroke-width="1.2"/></svg>
<div class="a" style="left:765px;top:91px;width:268px;height:17px;background:linear-gradient(#3a3a3a,#2f2f2f);border-bottom:1px solid #242424"></div>
<div class="t" style="left:776px;top:95px;font-size:11px;color:#c4c4c4;letter-spacing:0px">Create</div>
<div class="dd" style="left:815px;top:100px;border-top-color:#999"></div>
<div class="a" style="left:823px;top:92px;width:1px;height:15px;background:#262626"></div>
<div class="a" style="left:831px;top:93px;width:188px;height:13px;border-radius:6px;background:#2e2e2e;box-shadow:inset 0 1px 1px #1c1c1c"></div>
<svg class="a" style="left:835px;top:95px" width="12" height="10"><circle cx="4" cy="4" r="2.8" fill="none" stroke="#666" stroke-width="1.1"/><path d="M6 6L8 8.5" stroke="#666" stroke-width="1.2"/><path d="M8 3H11L9.5 5Z" fill="#666"/></svg>
<div class="t" style="left:846px;top:94.5px;font-size:12px;color:#777">All</div>
<!-- Main* -->
<div class="a" style="left:765px;top:108px;width:268px;height:18px;background:#3d3d3d;border-bottom:1px solid #2c2c2c"></div>
<svg class="a" style="left:768px;top:112px" width="10" height="9"><path d="M0 1H9L4.5 8Z" fill="#777"/></svg>
<svg class="a" style="left:782px;top:109px" width="15" height="15" viewBox="0 0 16 16"><path d="M1.5,8 L13.8,1.5 Q15.8,8 13.8,14.5 Z" fill="#f4f4f4" stroke="#111" stroke-width="1.6" stroke-linejoin="round"/><path d="M10.5,8 L1.5,8 M10.5,8 L13.8,1.5 M10.5,8 L13.8,14.5" stroke="#111" stroke-width="1.6"/></svg>
<div class="t" style="left:800px;top:112px;font-size:12px;color:#d0d0d0;font-weight:bold;letter-spacing:0.3px">Main*</div>
<svg class="a" style="left:1014px;top:114px" width="14" height="8"><path d="M0 2H4L2 5Z" fill="#bbb"/><path d="M5 1.5H13M5 4H13M5 6.5H13" stroke="#bbb" stroke-width="1.2"/></svg>
<div class="t" style="left:795px;top:128px;font-size:12px;color:#c6c6c6;letter-spacing:0.5px">Main Camera</div>
<svg class="a" style="left:783px;top:145px" width="9" height="10"><path d="M1 0V9L8 4.5Z" fill="#777"/></svg>
<div class="t" style="left:795px;top:144px;font-size:12px;color:#7f9ae6;letter-spacing:0.5px">LevelArt</div>
<div class="a" style="left:765px;top:157px;width:268px;height:16px;background:#3e63a0"></div>
<svg class="a" style="left:783px;top:161px" width="10" height="9"><path d="M0 1H9L4.5 8Z" fill="#7f95b8"/></svg>
<div class="t" style="left:795px;top:160px;font-size:12px;color:#9fc0f2;letter-spacing:0.5px">Tank</div>
<svg class="a" style="left:797px;top:177px" width="9" height="10"><path d="M1 0V9L8 4.5Z" fill="#777"/></svg>
<div class="t" style="left:809px;top:176px;font-size:12px;color:#6f8ad6;letter-spacing:0.5px">TankRenderers</div>

<!-- ===== Project panel ===== -->
<div class="a" style="left:765px;top:361px;width:268px;height:345px;background:#383838"></div>
<div class="a" style="left:765px;top:344px;width:80px;height:17px;background:linear-gradient(#404040,#3a3a3a);border-radius:3px 3px 0 0"></div>
<svg class="a" style="left:772px;top:347px" width="12" height="10"><path d="M1 2H5L6 3H11V9H1Z" fill="#aaa"/></svg>
<div class="t" style="left:788px;top:347px;font-size:12px;color:#c8c8c8">Project</div>
<svg class="a" style="left:1017px;top:352px" width="14" height="8"><path d="M0 2H4L2 5Z" fill="#bbb"/><path d="M5 1.5H13M5 4H13M5 6.5H13" stroke="#bbb" stroke-width="1.2"/></svg>
<div class="a" style="left:765px;top:361px;width:268px;height:17px;background:linear-gradient(#3a3a3a,#2f2f2f);border-bottom:1px solid #242424"></div>
<div class="t" style="left:777px;top:365px;font-size:11px;color:#c4c4c4;letter-spacing:0px">Create</div>
<div class="dd" style="left:817px;top:370px;border-top-color:#999"></div>
<div class="a" style="left:825px;top:362px;width:1px;height:15px;background:#262626"></div>
<div class="a" style="left:833px;top:363px;width:40px;height:13px;border-radius:6px;background:#2e2e2e"></div><svg class="a" style="left:837px;top:365px" width="12" height="10"><circle cx="4" cy="4" r="2.8" fill="none" stroke="#666" stroke-width="1.1"/><path d="M6 6L8 8.5" stroke="#666" stroke-width="1.2"/></svg>
<div class="a" style="left:1013px;top:363px;width:16px;height:13px;background:#444;border-radius:2px"></div>
<div class="a" style="left:879px;top:378px;width:1px;height:328px;background:#242424"></div>
<div class="a" style="left:880px;top:378px;width:153px;height:18px;background:#3e3e3e"></div>
<div class="a" style="left:765px;top:378px;width:114px;height:328px;overflow:hidden"><!-- left tree -->
<svg class="a" style="left:4px;top:5px" width="10" height="9"><path d="M0 1H9L4.5 8Z" fill="#666"/></svg>
<svg class="a" style="left:17px;top:1px" width="15" height="15"><path d="M7.5 1L9.3 5.5L14 5.8L10.4 8.8L11.6 13.5L7.5 10.9L3.4 13.5L4.6 8.8L1 5.8L5.7 5.5Z" fill="#f3d02f"/></svg>
<div class="t" style="left:34px;top:4px;font-size:12px;color:#cfcfcf;font-weight:bold;letter-spacing:0.5px">Favorites</div>
<svg class="a" style="left:31px;top:18px" width="15" height="15"><circle cx="6" cy="6" r="4.3" fill="none" stroke="#e8d030" stroke-width="1.8"/><path d="M9 9L13 13" stroke="#e8d030" stroke-width="2.2"/></svg>
<div class="t" style="left:48px;top:20px;font-size:12px;color:#bcbcbc;letter-spacing:0.5px">All Materials</div>
<svg class="a" style="left:31px;top:34px" width="15" height="15"><circle cx="6" cy="6" r="4.3" fill="none" stroke="#e8d030" stroke-width="1.8"/><path d="M9 9L13 13" stroke="#e8d030" stroke-width="2.2"/></svg>
<div class="t" style="left:48px;top:36px;font-size:12px;color:#bcbcbc;letter-spacing:0.5px">All Models</div>
<svg class="a" style="left:31px;top:50px" width="15" height="15"><circle cx="6" cy="6" r="4.3" fill="none" stroke="#e8d030" stroke-width="1.8"/><path d="M9 9L13 13" stroke="#e8d030" stroke-width="2.2"/></svg>
<div class="t" style="left:48px;top:52px;font-size:12px;color:#bcbcbc;letter-spacing:0.5px">All Prefabs</div>
<svg class="a" style="left:4px;top:85px" width="10" height="9"><path d="M0 1H9L4.5 8Z" fill="#666"/></svg>
<svg class="a" style="left:17px;top:82px" width="14" height="13"><path d="M1 2H5L6.5 3.5H13V12H1Z" fill="#8f9396"/><rect x="1" y="5" width="12" height="7" fill="#b0b4b6"/></svg>
<div class="t" style="left:34px;top:83px;font-size:12px;color:#cfcfcf;font-weight:bold;letter-spacing:0.5px">Assets</div>
<div class="a" style="left:0px;top:161px;width:114px;height:16px;background:#464646"></div>
<svg class="a" style="left:31px;top:98px" width="14" height="13"><path d="M1 2H5L6.5 3.5H13V12H1Z" fill="#8f9396"/><rect x="1" y="5" width="12" height="7" fill="#b0b4b6"/></svg>
<div class="t" style="left:48px;top:99px;font-size:12px;color:#bcbcbc;letter-spacing:0.5px">AudioClips</div>
<svg class="a" style="left:19px;top:116px" width="9" height="10"><path d="M1 0V9L8 4.5Z" fill="#666"/></svg>
<svg class="a" style="left:31px;top:114px" width="14" height="13"><path d="M1 2H5L6.5 3.5H13V12H1Z" fill="#8f9396"/><rect x="1" y="5" width="12" height="7" fill="#b0b4b6"/></svg>
<div class="t" style="left:48px;top:115px;font-size:12px;color:#bcbcbc;letter-spacing:0.5px">Editor</div>
<svg class="a" style="left:19px;top:132px" width="9" height="10"><path d="M1 0V9L8 4.5Z" fill="#666"/></svg>
<svg class="a" style="left:31px;top:130px" width="14" height="13"><path d="M1 2H5L6.5 3.5H13V12H1Z" fill="#8f9396"/><rect x="1" y="5" width="12" height="7" fill="#b0b4b6"/></svg>
<div class="t" style="left:48px;top:131px;font-size:12px;color:#bcbcbc;letter-spacing:0.5px">Fonts</div>
<svg class="a" style="left:31px;top:146px" width="14" height="13"><path d="M1 2H5L6.5 3.5H13V12H1Z" fill="#8f9396"/><rect x="1" y="5" width="12" height="7" fill="#b0b4b6"/></svg>
<div class="t" style="left:48px;top:147px;font-size:12px;color:#bcbcbc;letter-spacing:0.5px">Materials</div>
<svg class="a" style="left:31px;top:162px" width="14" height="13"><path d="M1 2H5L6.5 3.5H13V12H1Z" fill="#8f9396"/><rect x="1" y="5" width="12" height="7" fill="#b0b4b6"/></svg>
<div class="t" style="left:48px;top:163px;font-size:12px;color:#e0e0e0;letter-spacing:0.5px">Models</div>
<svg class="a" style="left:31px;top:178px" width="14" height="13"><path d="M1 2H5L6.5 3.5H13V12H1Z" fill="#8f9396"/><rect x="1" y="5" width="12" height="7" fill="#b0b4b6"/></svg>
<div class="t" style="left:48px;top:179px;font-size:12px;color:#bcbcbc;letter-spacing:0.5px">Prefabs</div>
<svg class="a" style="left:31px;top:194px" width="14" height="13"><path d="M1 2H5L6.5 3.5H13V12H1Z" fill="#8f9396"/><rect x="1" y="5" width="12" height="7" fill="#b0b4b6"/></svg>
<div class="t" style="left:48px;top:195px;font-size:12px;color:#bcbcbc;letter-spacing:0.5px">Scenes</div>
<svg class="a" style="left:31px;top:210px" width="14" height="13"><path d="M1 2H5L6.5 3.5H13V12H1Z" fill="#8f9396"/><rect x="1" y="5" width="12" height="7" fill="#b0b4b6"/></svg>
<div class="t" style="left:48px;top:211px;font-size:12px;color:#bcbcbc;letter-spacing:0.5px">Sprites</div>
<svg class="a" style="left:19px;top:228px" width="9" height="10"><path d="M1 0V9L8 4.5Z" fill="#666"/></svg>
<svg class="a" style="left:31px;top:226px" width="14" height="13"><path d="M1 2H5L6.5 3.5H13V12H1Z" fill="#8f9396"/><rect x="1" y="5" width="12" height="7" fill="#b0b4b6"/></svg>
<div class="t" style="left:48px;top:227px;font-size:12px;color:#bcbcbc;letter-spacing:0.5px">Standard Assets</div>

</div>
<div class="a" style="left:879px;top:396px;width:1px;height:310px;background:#242424"></div>
<!-- right column thumbnails -->
<div class="a" style="left:919px;top:521px;width:60px;height:48px;background:#4a4a4a"></div>
<svg class="a" style="left:919px;top:521px" width="60" height="48" viewBox="0 0 60 48">
<path d="M11 27 L14 20 L22 16 L22 11 L30 7 L40 9 L44 14 L44 19 L50 22 L52 30 L48 38 L40 43 L30 44 L18 40 L11 34 Z" fill="#4fb83e"/>
<path d="M22 11 L30 7 L40 9 L44 14 L36 17 L26 15 Z" fill="#8ee070"/>
<path d="M14 20 L22 16 L26 15 L36 17 L44 19 L50 22 L40 26 L26 25 Z" fill="#7ad85c"/>
<path d="M11 30 L26 36 L40 34 L52 30 L48 38 L40 43 L30 44 L18 40 L11 34 Z" fill="#3a9a30"/>
<circle cx="18" cy="33" r="4" fill="#2f8a28" stroke="#9ae880" stroke-width="1"/><circle cx="29" cy="37" r="4" fill="#2f8a28" stroke="#9ae880" stroke-width="1"/><circle cx="39" cy="35" r="3.5" fill="#2f8a28" stroke="#9ae880" stroke-width="1"/>
<path d="M40 13 L50 15 L50 19 L42 18 Z" fill="#6ad050"/>
</svg>
<div class="a" style="left:973px;top:530px;width:15px;height:15px;border-radius:50%;background:#555;border:1.5px solid #bbb"></div>
<svg class="a" style="left:977px;top:534px" width="8" height="8"><path d="M2 1L7 4L2 7Z" fill="#ddd"/></svg>
<div class="t" style="left:935px;top:574px;font-size:11px;color:#c8c8c8;letter-spacing:0.5px">Tank</div>
<div class="a" style="left:919px;top:602px;width:60px;height:60px;background:#4a4a4a"></div>
<svg class="a" style="left:919px;top:602px" width="60" height="60"><path d="M1 31L25 22L56 27L37 43Z" fill="#d9ae6c"/><path d="M1 31L37 43L37 44.5L1 32.5Z" fill="#8a6d44"/></svg>
<div class="a" style="left:973px;top:623px;width:15px;height:15px;border-radius:50%;background:#555;border:1.5px solid #bbb"></div>
<svg class="a" style="left:977px;top:627px" width="8" height="8"><path d="M2 1L7 4L2 7Z" fill="#ddd"/></svg>
<div class="t" style="left:931px;top:667px;font-size:11px;color:#c8c8c8;letter-spacing:0.5px">Terrain</div>
<!-- scrollbar -->
<div class="a" style="left:1019px;top:396px;width:13px;height:293px;background:#2f2f2f"></div>
<div class="a" style="left:1020px;top:398px;width:11px;height:14px;background:#3a3a3a"></div>
<div class="a" style="left:1020px;top:617px;width:11px;height:46px;background:#555;border-radius:5px"></div>
<svg class="a" style="left:1022px;top:678px" width="8" height="6"><path d="M0 1H7L3.5 5Z" fill="#777"/></svg>
<div class="a" style="left:880px;top:689px;width:153px;height:17px;background:#333;border-top:1px solid #2a2a2a"></div>
<div class="a" style="left:962px;top:697px;width:54px;height:2px;background:#2a2a2a"></div>
<div class="a" style="left:988px;top:692px;width:11px;height:11px;border-radius:50%;background:linear-gradient(#8a8a8a,#555)"></div>
<div class="a" style="left:1033px;top:76px;width:4px;height:630px;background:#282828"></div>

<!-- ===== Inspector ===== -->
<div class="a" style="left:1037px;top:91px;width:329px;height:615px;background:#383838"></div>
<div class="a" style="left:1037px;top:75px;width:98px;height:16px;background:linear-gradient(#404040,#3a3a3a);border-radius:3px 3px 0 0"></div>
<div class="a" style="left:1045px;top:78px;width:10px;height:10px;border-radius:50%;background:#ddd"></div>
<div class="a" style="left:1049px;top:80px;width:2px;height:6px;background:#333"></div>
<div class="t" style="left:1060px;top:78px;font-size:12px;color:#c8c8c8">Inspector</div>
<svg class="a" style="left:1333px;top:80px" width="9" height="10"><path d="M2.5 5V3Q2.5 1 4.5 1Q6.5 1 6.5 3" fill="none" stroke="#666" stroke-width="1.2"/><rect x="1" y="5" width="7" height="5" fill="#666"/></svg>
<svg class="a" style="left:1345px;top:82px" width="14" height="8"><path d="M0 2H4L2 5Z" fill="#bbb"/><path d="M5 1.5H13M5 4H13M5 6.5H13" stroke="#bbb" stroke-width="1.2"/></svg>
<div class="a" style="left:1037px;top:91px;width:329px;height:69px;background:#3e3e3e;border-bottom:1px solid #2a2a2a"></div>
<svg class="a" style="left:1042px;top:99px" width="24" height="23" viewBox="0 0 24 23"><path d="M3 6L11 2L19 6L19 15L11 19L3 15Z" fill="#5fb2e6"/><path d="M3 6L11 10L19 6L11 2Z" fill="#b8e2fb"/><path d="M11 10L19 6L19 15L11 19Z" fill="#3f8fc8"/><rect x="13" y="11" width="8" height="10" fill="#e8e8e8"/><path d="M4 16L9 16L6.5 20Z" fill="#ccc"/></svg>
<div class="a" style="left:1080px;top:102px;width:13px;height:12px;background:#2d2d2d;border:1px solid #222;border-radius:2px"></div>
<svg class="a" style="left:1080px;top:101px" width="14" height="13"><path d="M2.5 6.5L5.5 10L12 2" fill="none" stroke="#f0f0f0" stroke-width="2"/></svg>
<div class="a" style="left:1099px;top:100px;width:192px;height:15px;background:#303030;border:1px solid #262626;border-radius:2px"></div>
<div class="t" style="left:1101px;top:102px;font-size:12px;color:#cfcfcf;letter-spacing:0.4px">Tank</div>
<div class="a" style="left:1297px;top:102px;width:12px;height:12px;background:#303030;border:1px solid #262626;border-radius:2px"></div>
<div class="t" style="left:1313px;top:102px;font-size:12px;color:#c8c8c8;letter-spacing:0.4px">Static</div>
<svg class="a" style="left:1349px;top:103px" width="11" height="8"><path d="M0.5 0.5H10.5L5.5 7Z" fill="#bbb"/></svg>
<div class="t" style="left:1072px;top:121px;font-size:12px;color:#b8b8b8;letter-spacing:0.5px">Tag</div>
<div class="btn" style="left:1099px;top:120px;width:113px;height:13px;border-radius:2px"></div>
<div class="t" style="left:1104px;top:121px;font-size:10.5px;color:#c4c4c4;letter-spacing:0.5px">Untagged</div>
<svg class="a" style="left:1202px;top:122px" width="6" height="10"><path d="M0.5 4H5.5L3 1ZM0.5 6H5.5L3 9Z" fill="#aaa"/></svg>
<div class="t" style="left:1219px;top:121px;font-size:12px;color:#b8b8b8;letter-spacing:0.5px">Layer</div>
<div class="btn" style="left:1259px;top:120px;width:100px;height:13px;border-radius:2px"></div>
<div class="t" style="left:1264px;top:121px;font-size:10.5px;color:#c4c4c4;letter-spacing:0.5px">Default</div>
<svg class="a" style="left:1349px;top:122px" width="6" height="10"><path d="M0.5 4H5.5L3 1ZM0.5 6H5.5L3 9Z" fill="#aaa"/></svg>
<div class="t" style="left:1059px;top:139px;font-size:12px;color:#b8b8b8;letter-spacing:0.5px">Model</div>
<div class="btn" style="left:1099px;top:139px;width:260px;height:14px;border-radius:2px"></div>
<div class="a" style="left:1187px;top:139px;width:1px;height:14px;background:#2a2a2a"></div>
<div class="a" style="left:1276px;top:139px;width:1px;height:14px;background:#2a2a2a"></div>
<div class="t" style="left:1127px;top:140px;font-size:10.5px;color:#c4c4c4;letter-spacing:0.6px">Select</div>
<div class="t" style="left:1216px;top:140px;font-size:10.5px;color:#c4c4c4;letter-spacing:0.6px">Revert</div>
<div class="t" style="left:1305px;top:140px;font-size:10.5px;color:#c4c4c4;letter-spacing:0.6px">Open</div>
<!-- transform -->
<div class="a" style="left:1037px;top:160px;width:329px;height:18px;background:#3a3a3a"></div>
<svg class="a" style="left:1040px;top:166px" width="10" height="9"><path d="M0 1H9L4.5 8Z" fill="#666"/></svg>
<svg class="a" style="left:1053px;top:162px" width="15" height="15"><path d="M7 9V1.5" stroke="#e0d020" stroke-width="1.6"/><path d="M7 9L1.5 13" stroke="#3a9ae0" stroke-width="1.8"/><path d="M7 9L13.5 12.5" stroke="#d03a2a" stroke-width="1.8"/><path d="M7 9L5 6" stroke="#40c040" stroke-width="1.2"/></svg>
<div class="t" style="left:1087px;top:165px;font-size:12px;color:#cfcfcf;font-weight:bold;letter-spacing:0.6px">Transform</div>
<div class="a" style="left:1333px;top:163px;width:13px;height:12px;background:linear-gradient(#7ab0e8,#3a70b8);border:1px solid #aac8ee"></div>
<div class="t" style="left:1336px;top:164px;font-size:9px;color:#fff;font-weight:bold">?</div>
<svg class="a" style="left:1351px;top:162px" width="15" height="14"><circle cx="6" cy="6" r="3" fill="none" stroke="#ccc" stroke-width="2.4"/><path d="M6 0.5V2.5M6 9.5V11.5M0.5 6H2.5M9.5 6H11.5M2 2L3.4 3.4M8.6 8.6L10 10M10 2L8.6 3.4M3.4 8.6L2 10" stroke="#ccc" stroke-width="1.8"/><path d="M10 11H14L12 13.5Z" fill="#ccc"/></svg>
<div class="t" style="left:1052px;top:181px;font-size:12px;color:#d0d0d0;font-weight:bold;letter-spacing:0.5px">Position</div>
<div class="t" style="left:1170px;top:181px;font-size:12px;color:#d0d0d0;font-weight:bold">X</div>
<div class="a" style="left:1181px;top:180px;width:50px;height:15px;background:#303030;border-bottom:1px solid #262626"></div>
<div class="t" style="left:1184px;top:181px;font-size:12px;color:#d0d0d0;font-weight:bold">0</div>
<div class="t" style="left:1235px;top:181px;font-size:12px;color:#d0d0d0;font-weight:bold">Y</div>
<div class="a" style="left:1246px;top:180px;width:50px;height:15px;background:#303030;border-bottom:1px solid #262626"></div>
<div class="t" style="left:1249px;top:181px;font-size:12px;color:#d0d0d0;font-weight:bold">0</div>
<div class="t" style="left:1301px;top:181px;font-size:12px;color:#d0d0d0;font-weight:bold">Z</div>
<div class="a" style="left:1312px;top:180px;width:49px;height:15px;background:#303030;border-bottom:1px solid #262626"></div>
<div class="t" style="left:1315px;top:181px;font-size:12px;color:#d0d0d0;font-weight:bold">0</div>
<div class="t" style="left:1052px;top:199px;font-size:12px;color:#d0d0d0;font-weight:bold;letter-spacing:0.5px">Rotation</div>
<div class="t" style="left:1170px;top:199px;font-size:12px;color:#d0d0d0;font-weight:bold">X</div>
<div class="a" style="left:1181px;top:198px;width:50px;height:15px;background:#303030;border-bottom:1px solid #262626"></div>
<div class="t" style="left:1184px;top:199px;font-size:12px;color:#d0d0d0;font-weight:bold">0</div>
<div class="t" style="left:1235px;top:199px;font-size:12px;color:#d0d0d0;font-weight:bold">Y</div>
<div class="a" style="left:1246px;top:198px;width:50px;height:15px;background:#303030;border-bottom:1px solid #262626"></div>
<div class="t" style="left:1249px;top:199px;font-size:12px;color:#d0d0d0;font-weight:bold">0</div>
<div class="t" style="left:1301px;top:199px;font-size:12px;color:#d0d0d0;font-weight:bold">Z</div>
<div class="a" style="left:1312px;top:198px;width:49px;height:15px;background:#303030;border-bottom:1px solid #262626"></div>
<div class="t" style="left:1315px;top:199px;font-size:12px;color:#d0d0d0;font-weight:bold">0</div>
<div class="t" style="left:1052px;top:217px;font-size:12px;color:#b8b8b8;font-weight:normal;letter-spacing:0.5px">Scale</div>
<div class="t" style="left:1170px;top:217px;font-size:12px;color:#b8b8b8;font-weight:normal">X</div>
<div class="a" style="left:1181px;top:216px;width:50px;height:15px;background:#303030;border-bottom:1px solid #262626"></div>
<div class="t" style="left:1184px;top:217px;font-size:12px;color:#d0d0d0;font-weight:normal">1</div>
<div class="t" style="left:1235px;top:217px;font-size:12px;color:#b8b8b8;font-weight:normal">Y</div>
<div class="a" style="left:1246px;top:216px;width:50px;height:15px;background:#303030;border-bottom:1px solid #262626"></div>
<div class="t" style="left:1249px;top:217px;font-size:12px;color:#d0d0d0;font-weight:normal">1</div>
<div class="t" style="left:1301px;top:217px;font-size:12px;color:#b8b8b8;font-weight:normal">Z</div>
<div class="a" style="left:1312px;top:216px;width:49px;height:15px;background:#303030;border-bottom:1px solid #262626"></div>
<div class="t" style="left:1315px;top:217px;font-size:12px;color:#d0d0d0;font-weight:normal">1</div>

<div class="a" style="left:1037px;top:233px;width:329px;height:1px;background:#2a2a2a"></div>
<div class="a" style="left:1037px;top:234px;width:329px;height:1px;background:#444"></div>
<div class="btn" style="left:1085px;top:245px;width:228px;height:22px;border-radius:3px"></div>
<div class="t" style="left:1148px;top:249px;font-size:13px;color:#c4c4c4;letter-spacing:0.3px">Add Component</div>
<div class="a" style="left:1037px;top:691px;width:329px;height:15px;background:#3a3a3a;border-top:1px solid #2c2c2c"></div>
<div class="t" style="left:1041px;top:693px;font-size:12px;color:#d0d0d0;font-weight:bold;letter-spacing:0.6px">Asset Labels</div>

<!-- ===== Status bar ===== -->
<div class="a" style="left:0;top:706px;width:1366px;height:22px;background:#292929"></div>
<div class="a" style="left:3px;top:711px;width:13px;height:12px;border-radius:50%;background:#d8d8d8"></div>
<div class="a" style="left:8.5px;top:713px;width:2px;height:5px;background:#333"></div>
<div class="a" style="left:8.5px;top:719px;width:2px;height:2px;background:#333"></div>
<div class="t" style="left:20px;top:713px;font-size:12px;color:#bdbdbd;letter-spacing:0.35px">Finished updating scripts / assemblies</div>
<div class="a" style="left:1155px;top:709px;width:183px;height:17px;background:#2f2f2f;border:1px solid #222"></div>
<div class="a" style="left:1156px;top:710px;width:113px;height:15px;background:#244d96"></div>
<div class="t" style="left:1189px;top:712px;font-size:11px;color:#aac0e0;letter-spacing:0.6px">6/11 Visibility</div>
<div class="a" style="left:1268px;top:711px;width:1px;height:13px;background:#aac0e0"></div>
<div class="t" style="left:1273px;top:712px;font-size:11px;color:#b8b8b8;letter-spacing:0.6px">1 jobs</div>

<!-- ===== Taskbar ===== -->
<div class="a" style="left:0;top:728px;width:1366px;height:40px;background:#000"></div>
<svg class="a" style="left:16px;top:740px" width="16" height="16"><path d="M0 0H7.5V7.5H0ZM8.5 0H16V7.5H8.5ZM0 8.5H7.5V16H0ZM8.5 8.5H16V16H8.5Z" fill="#fff"/></svg>
<div class="a" style="left:64px;top:740px;width:15px;height:15px;border-radius:50%;border:2px solid #fff"></div>
<svg class="a" style="left:110px;top:740px" width="21" height="16"><rect x="4" y="1.5" width="13" height="13" fill="none" stroke="#fff" stroke-width="1.4"/><path d="M1 3.5V12.5M20 3.5V12.5" stroke="#fff" stroke-width="1.4"/></svg>
<svg class="a" style="left:161px;top:737px" width="21" height="21" viewBox="0 0 21 21"><path d="M19 12H6Q6 17 11.5 17Q15 17 18 15.5V19.5Q15 21 11 21Q2 21 2 12Q2 4 10 2Q5 5 5.5 9H14Q14 4 8 4Q12 0 16 1Q21 3 19 12Z" fill="#1e82d8"/></svg>
<svg class="a" style="left:208px;top:736px" width="23" height="23" viewBox="0 0 23 23"><path d="M7 7V5Q7 1.5 11.5 1.5Q16 1.5 16 5V7" fill="none" stroke="#fff" stroke-width="1.5"/><rect x="1" y="6.5" width="21" height="16" fill="#fff"/><rect x="6" y="10" width="5" height="5" fill="#f25022"/><rect x="12" y="10" width="5" height="5" fill="#7fba00"/><rect x="6" y="16" width="5" height="5" fill="#00a4ef"/><rect x="12" y="16" width="5" height="5" fill="#ffb900"/></svg>
<svg class="a" style="left:258px;top:737px" width="23" height="21" viewBox="0 0 23 21"><path d="M1 2H8L10 4H22V19H1Z" fill="#e8b84a"/><rect x="1" y="6" width="21" height="13" fill="#f8d775"/><rect x="5" y="12" width="13" height="7" fill="#2a8ad4"/><rect x="8" y="14" width="7" height="5" fill="#f8d775"/></svg>
<div class="a" style="left:305px;top:735px;width:25px;height:25px;background:#4aa3e8"></div>
<svg class="a" style="left:307px;top:738px" width="21" height="18" viewBox="0 0 22 17"><g fill="none" stroke="#fff" stroke-width="2.4"><circle cx="11" cy="5" r="3.3"/><circle cx="5.5" cy="11" r="3.3"/><circle cx="16.5" cy="11" r="3.3"/></g></svg>
<svg class="a" style="left:355px;top:736px" width="24" height="24" viewBox="0 0 24 24"><circle cx="12" cy="12" r="11.5" fill="#db4437"/><path d="M12 12L22 6.5A11.5 11.5 0 0 1 12 23.5Z" fill="#f4c20d"/><path d="M12 12L12 23.5A11.5 11.5 0 0 1 1.9 6.5Z" fill="#0f9d58"/><circle cx="12" cy="12" r="5.5" fill="#fff"/><circle cx="12" cy="12" r="4.3" fill="#4285f4"/></svg>
<div class="a" style="left:391px;top:728px;width:48px;height:40px;background:#4a7a42"></div>
<div class="a" style="left:422px;top:728px;width:17px;height:38px;background:#4f4f4f"></div>
<svg class="a" style="left:404px;top:736px" width="22" height="23" viewBox="0 0 16 16"><path d="M1.5,8 L14,0.8 Q15.5,8 14,15.2 Z" fill="#f8f8f8" stroke="#111" stroke-width="1.5" stroke-linejoin="round"/><path d="M10.5,8 L1.5,8 M10.5,8 L14,0.8 M10.5,8 L14,15.2" stroke="#111" stroke-width="1.3"/></svg>
<div class="a" style="left:298px;top:766px;width:40px;height:2px;background:#8cc4f0"></div>
<div class="a" style="left:347px;top:766px;width:40px;height:2px;background:#8cc4f0"></div>
<div class="a" style="left:392px;top:766px;width:47px;height:2px;background:#6ccf5a"></div>
<!-- systray -->
<svg class="a" style="left:1127px;top:742px" width="14" height="9"><path d="M1 8L7 2L13 8" fill="none" stroke="#fff" stroke-width="1.3"/></svg>
<svg class="a" style="left:1150px;top:741px" width="20" height="14"><path d="M2 2V5M5 2V5M1 5H6V7Q6 9 3.5 9Q1 9 1 7ZM3.5 9V12" fill="none" stroke="#fff" stroke-width="1.2"/><rect x="8" y="4" width="10" height="7" fill="none" stroke="#fff" stroke-width="1.2"/><rect x="9" y="5" width="7" height="5" fill="#fff"/></svg>
<svg class="a" style="left:1178px;top:739px" width="16" height="16"><path d="M2 14A12 12 0 0 1 14 2M5 14A9 9 0 0 1 14 5M8 14A6 6 0 0 1 14 8" fill="none" stroke="#aaa" stroke-width="1.2"/><circle cx="13" cy="13" r="1.8" fill="#fff"/></svg>
<svg class="a" style="left:1200px;top:739px" width="18" height="16"><path d="M1 6H4L8 2V14L4 10H1Z" fill="#fff"/><path d="M11 5Q13 8 11 11M13.5 3Q17 8 13.5 13" fill="none" stroke="#999" stroke-width="1.2"/></svg>
<div class="t" style="left:1225px;top:740px;font-size:15px;color:#fff">中</div>
<div class="t" style="left:1266px;top:733px;font-size:12.5px;color:#fff">11:32</div>
<div class="t" style="left:1247px;top:751px;font-size:13px;color:#fff">2017/11/7</div>
<svg class="a" style="left:1321px;top:736px" width="30" height="30"><path d="M2 3H17V14H9L5 17V14H2Z" fill="#fff"/><path d="M5 6H14M5 9H14M5 11.5H11" stroke="#000" stroke-width="1"/><circle cx="19" cy="19" r="8" fill="#222" stroke="#888" stroke-width="1"/></svg>
<div class="t" style="left:1335px;top:747px;font-size:13px;color:#fff;font-weight:bold">4</div>

<!-- ===== context menu ===== -->
<div class="a" style="left:847px;top:164px;width:168px;height:357px;background:#f0f0f0;border:1px solid #cfcfcf;box-shadow:1px 1px 2px rgba(0,0,0,0.3)"></div>
<div class="menu" style="left:882px;top:172px">Copy</div>
<div class="menu" style="left:882px;top:194px">Paste</div>
<div class="a" style="left:877px;top:214px;width:135px;height:1px;background:#d7d7d7"></div>
<div class="menu" style="left:882px;top:223px">Rename</div>
<div class="menu" style="left:882px;top:245px">Duplicate</div>
<div class="menu" style="left:882px;top:267px">Delete</div>
<div class="a" style="left:877px;top:287px;width:135px;height:1px;background:#d7d7d7"></div>
<div class="menu" style="left:882px;top:296px">Select Prefab</div>
<div class="a" style="left:877px;top:316px;width:135px;height:1px;background:#d7d7d7"></div>
<div class="a" style="left:850px;top:320px;width:162px;height:22px;background:#91c9f7"></div>
<div class="menu" style="left:882px;top:325px">Create Empty</div>
<div class="menu" style="left:882px;top:347px">3D Object</div>
<svg class="a" style="left:997px;top:347px" width="7" height="10"><path d="M1.5 1L5.5 5L1.5 9" fill="none" stroke="#333" stroke-width="1.2"/></svg>
<div class="menu" style="left:882px;top:369px">2D Object</div>
<svg class="a" style="left:997px;top:369px" width="7" height="10"><path d="M1.5 1L5.5 5L1.5 9" fill="none" stroke="#333" stroke-width="1.2"/></svg>
<div class="menu" style="left:882px;top:391px">Effects</div>
<svg class="a" style="left:997px;top:391px" width="7" height="10"><path d="M1.5 1L5.5 5L1.5 9" fill="none" stroke="#333" stroke-width="1.2"/></svg>
<div class="menu" style="left:882px;top:413px">Light</div>
<svg class="a" style="left:997px;top:413px" width="7" height="10"><path d="M1.5 1L5.5 5L1.5 9" fill="none" stroke="#333" stroke-width="1.2"/></svg>
<div class="menu" style="left:882px;top:435px">Audio</div>
<svg class="a" style="left:997px;top:435px" width="7" height="10"><path d="M1.5 1L5.5 5L1.5 9" fill="none" stroke="#333" stroke-width="1.2"/></svg>
<div class="menu" style="left:882px;top:457px">Video</div>
<svg class="a" style="left:997px;top:457px" width="7" height="10"><path d="M1.5 1L5.5 5L1.5 9" fill="none" stroke="#333" stroke-width="1.2"/></svg>
<div class="menu" style="left:882px;top:479px">UI</div>
<svg class="a" style="left:997px;top:479px" width="7" height="10"><path d="M1.5 1L5.5 5L1.5 9" fill="none" stroke="#333" stroke-width="1.2"/></svg>
<div class="menu" style="left:882px;top:501px">Camera</div>

<!-- green circle -->
<div class="a" style="left:1347px;top:655.5px;width:47px;height:47px;border-radius:50%;background:radial-gradient(circle at 45% 40%,#5fd060,#3aae40);border:2px solid #e8f8e8;box-shadow:0 0 2px 1px #222"></div>
<div class="t" style="left:1352px;top:673px;font-size:11.5px;color:#f4f4f4;font-weight:bold">66</div>
<!-- watermark -->
<div class="t" style="left:1162px;top:724px;font-size:30px;color:#dedede;text-shadow:1px 1px 1px #333,-1px 0 1px #555;letter-spacing:-0.2px">头条号 / Okay</div>

<div id="content"></div>
</body></html>
